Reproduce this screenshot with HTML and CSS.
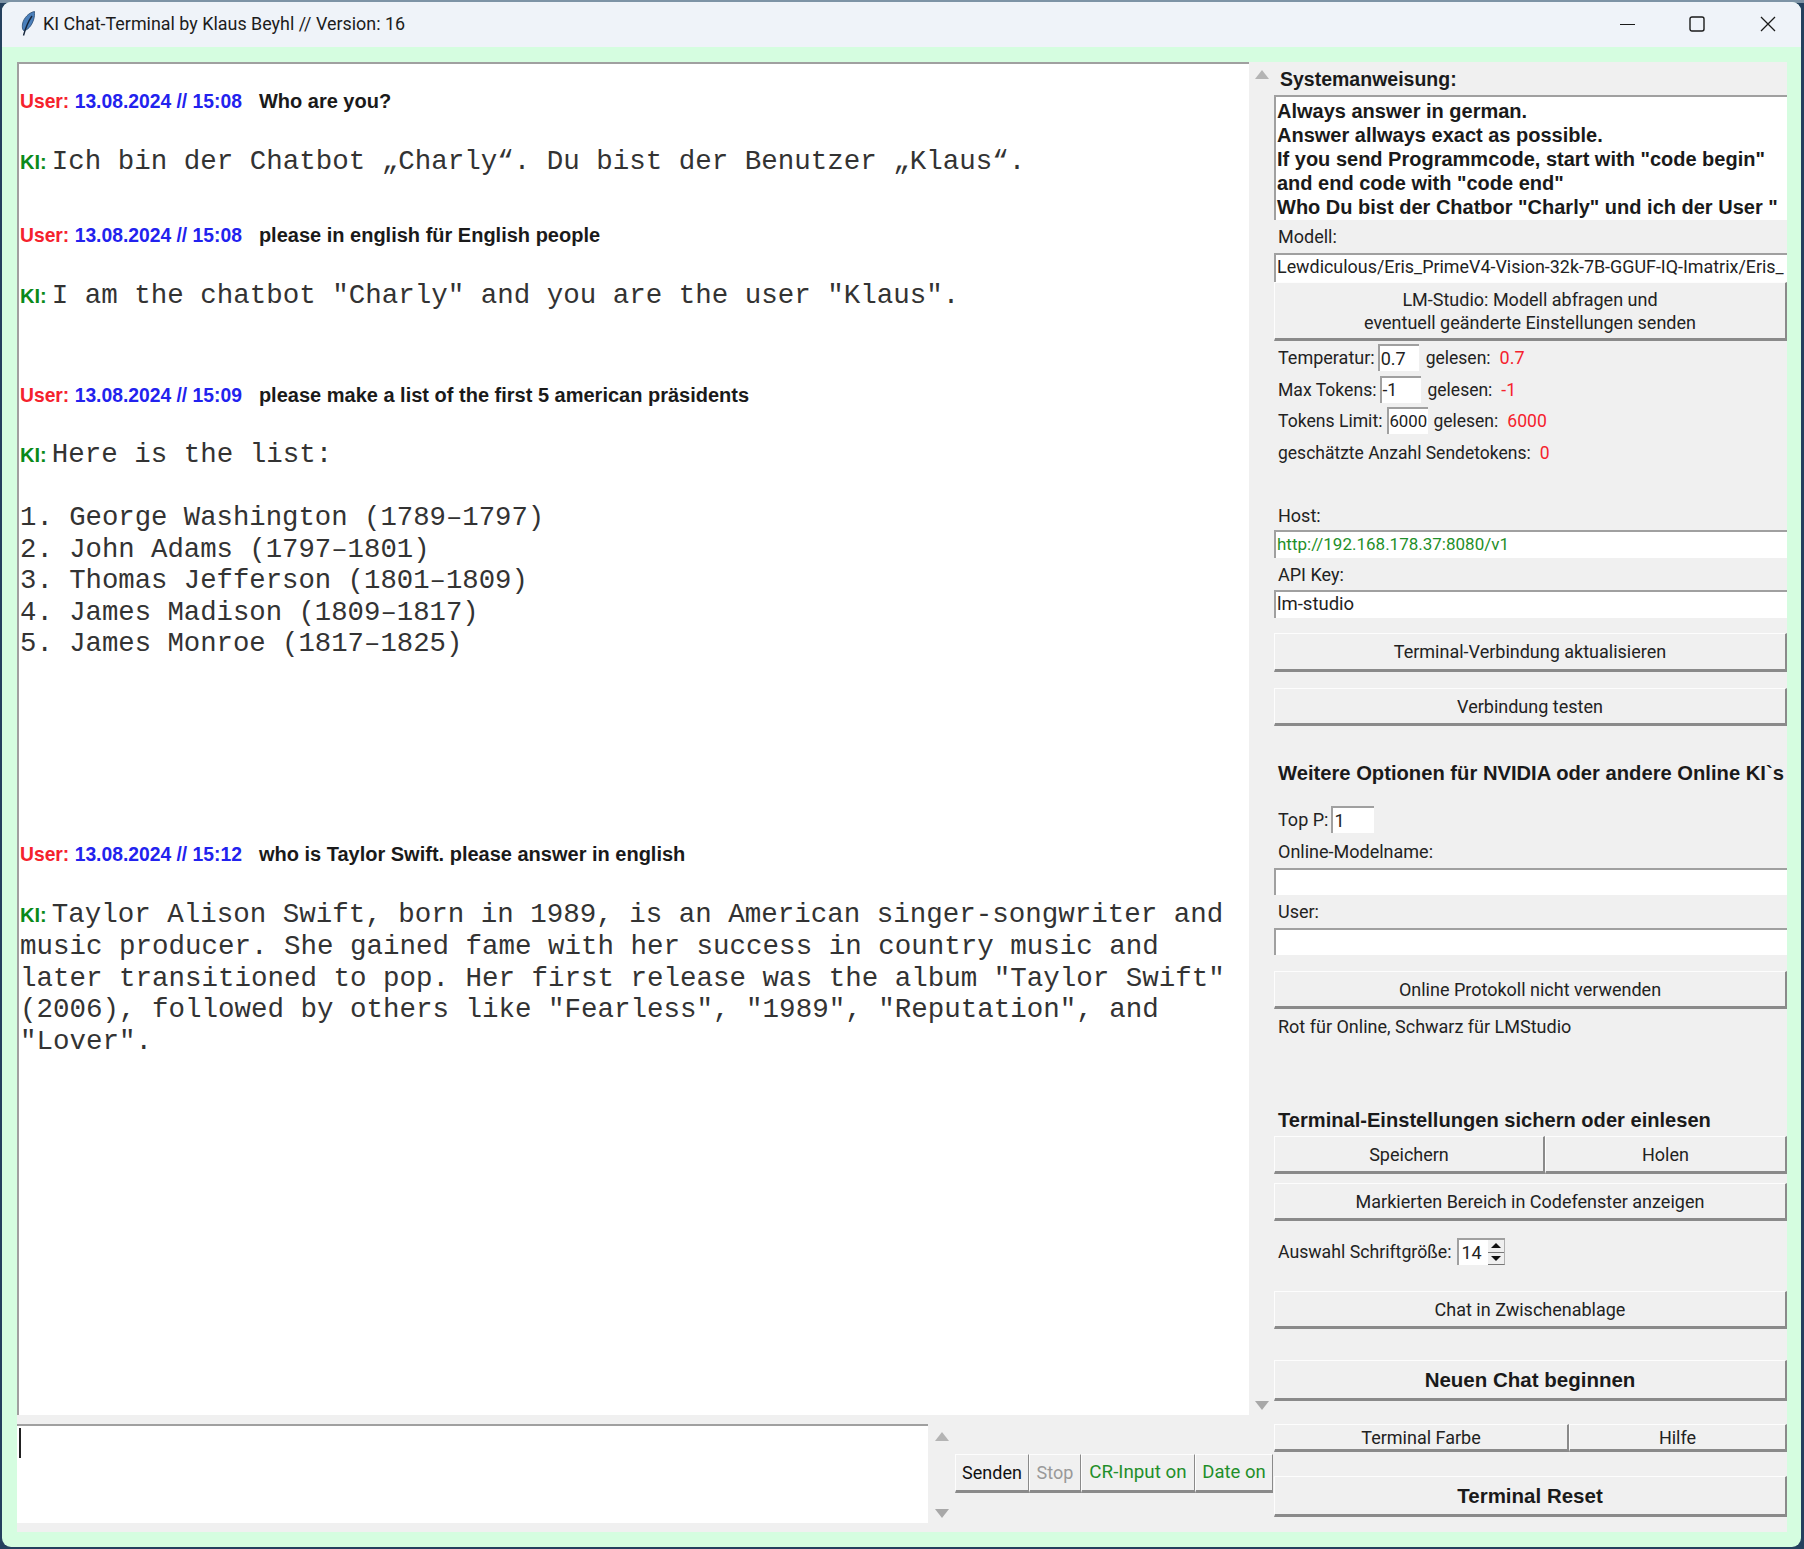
FILE: index.html
```html
<!DOCTYPE html>
<html lang="de">
<head>
    <meta charset="UTF-8">
    <title>KI Chat-Terminal by Klaus Beyhl // Version: 16</title>
    <link rel="stylesheet" href="styles.css">
</head>
<body>

<div class="window">

    <!-- Title bar -->
    <div class="titlebar">
        <svg class="feather" viewBox="0 0 14 25" width="14" height="25">
            <path d="M13.500 0.500 C8 1.500 2.500 7 1.500 13 C1 16 1.500 18.500 2.500 19.500 C6.500 19.500 10.500 15 12.500 9 C13.500 6 13.800 3 13.500 0.500 Z" fill="#4a7fbb" stroke="#27496f" stroke-width="0.800"/>
            <path d="M11 5 C7.500 10 4.500 17 2.500 24.500" fill="none" stroke="#16263c" stroke-width="1.400"/>
        </svg>
        <span class="title">KI Chat-Terminal by Klaus Beyhl // Version: 16</span>
        <div class="controls">
            <svg class="ctl ctl-min" viewBox="0 0 16 16" width="16" height="16"><path d="M0 8.500 H15" stroke="#1a1a1a" stroke-width="1.200"/></svg>
            <svg class="ctl ctl-max" viewBox="0 0 16 16" width="16" height="16"><rect x="1" y="1" width="14" height="14" rx="2" fill="none" stroke="#1a1a1a" stroke-width="1.400"/></svg>
            <svg class="ctl ctl-close" viewBox="0 0 16 16" width="16" height="16"><path d="M1 1 L15 15 M15 1 L1 15" stroke="#1a1a1a" stroke-width="1.300"/></svg>
        </div>
    </div>

    <div class="client">
        <div class="panel">

            <!-- Left: chat and input -->
            <div class="main">
                <div class="chat-row">
                    <div class="chat">
                        <p class="msg-user msg-1"><span class="who">User:</span> <span class="stamp">13.08.2024 // 15:08</span><span class="ask">Who are you?</span></p>
                        <p class="msg-ki msg-2"><span class="ki">KI:</span>Ich bin der Chatbot „Charly“. Du bist der Benutzer „Klaus“.</p>

                        <p class="msg-user msg-3"><span class="who">User:</span> <span class="stamp">13.08.2024 // 15:08</span><span class="ask">please in english für English people</span></p>
                        <p class="msg-ki msg-2"><span class="ki">KI:</span>I am the chatbot "Charly" and you are the user "Klaus".</p>

                        <p class="msg-user msg-4"><span class="who">User:</span> <span class="stamp">13.08.2024 // 15:09</span><span class="ask">please make a list of the first 5 american präsidents</span></p>
                        <p class="msg-ki msg-2"><span class="ki">KI:</span>Here is the list:</p>
                        <p class="msg-ki msg-list">1. George Washington (1789–1797)<br>2. John Adams (1797–1801)<br>3. Thomas Jefferson (1801–1809)<br>4. James Madison (1809–1817)<br>5. James Monroe (1817–1825)</p>

                        <p class="msg-user msg-5"><span class="who">User:</span> <span class="stamp">13.08.2024 // 15:12</span><span class="ask">who is Taylor Swift. please answer in english</span></p>
                        <p class="msg-ki msg-2"><span class="ki">KI:</span>Taylor Alison Swift, born in 1989, is an American singer-songwriter and<br>music producer. She gained fame with her success in country music and<br>later transitioned to pop. Her first release was the album "Taylor Swift"<br>(2006), followed by others like "Fearless", "1989", "Reputation", and<br>"Lover".</p>
                    </div>
                    <div class="scroll scroll-chat">
                        <span class="arrow-up"></span>
                        <span class="arrow-down"></span>
                    </div>
                </div>

                <div class="input-row">
                    <div class="input-box"><span class="caret"></span></div>
                    <div class="scroll scroll-input">
                        <span class="arrow-up"></span>
                        <span class="arrow-down"></span>
                    </div>
                    <div class="send-btns">
                        <div class="btn small btn-send">Senden</div>
                        <div class="btn small btn-stop muted">Stop</div>
                        <div class="btn small btn-cr green">CR-Input on</div>
                        <div class="btn small btn-date green">Date on</div>
                    </div>
                </div>
            </div>

            <!-- Right: settings -->
            <div class="side">
                <div class="label bold sys-label">Systemanweisung:</div>
                <div class="sys-text">Always answer in german.<br>Answer allways exact as possible.<br>If you send Programmcode, start with "code begin"<br>and end code with "code end"<br>Who Du bist der Chatbor "Charly" und ich der User "</div>

                <div class="label h33">Modell:</div>
                <div class="entry h29 model">Lewdiculous/Eris_PrimeV4-Vision-32k-7B-GGUF-IQ-Imatrix/Eris_</div>
                <div class="btn h59">LM-Studio: Modell abfragen und<br>eventuell geänderte Einstellungen senden</div>

                <div class="row row-temp">
                    <span>Temperatur:</span><span class="entry mini w41">0.7</span><span class="read">gelesen:</span><span class="red">0.7</span>
                </div>
                <div class="row row-next">
                    <span>Max Tokens:</span><span class="entry mini w41">-1</span><span class="read">gelesen:</span><span class="red">-1</span>
                </div>
                <div class="row row-last">
                    <span>Tokens Limit:</span><span class="entry mini w41 narrow">6000</span><span class="read tight">gelesen:</span><span class="red">6000</span>
                </div>
                <div class="row row-send">
                    <span>geschätzte Anzahl Sendetokens:</span><span class="red">0</span>
                </div>

                <div class="label h30 mt34">Host:</div>
                <div class="entry h28 green url">http://192.168.178.37:8080/v1</div>
                <div class="label h32">API Key:</div>
                <div class="entry h28 key">lm-studio</div>

                <div class="btn h39 mt15">Terminal-Verbindung aktualisieren</div>
                <div class="btn h38 mt16">Verbindung testen</div>

                <div class="label bold head mt30">Weitere Optionen für NVIDIA oder andere Online KI`s</div>
                <div class="row row-topp">
                    <span>Top P:</span><span class="entry mini w43">1</span>
                </div>
                <div class="label h33 mt2">Online-Modelname:</div>
                <div class="entry h27"></div>
                <div class="label h33">User:</div>
                <div class="entry h27"></div>
                <div class="btn h38 mt16">Online Protokoll nicht verwenden</div>
                <div class="label h33 mt1">Rot für Online, Schwarz für LMStudio</div>

                <div class="label bold head2 mt61">Terminal-Einstellungen sichern oder einlesen</div>
                <div class="split">
                    <div class="btn h38 save">Speichern</div>
                    <div class="btn h38 grow">Holen</div>
                </div>
                <div class="btn h38 mt9">Markierten Bereich in Codefenster anzeigen</div>

                <div class="row row-spin">
                    <span>Auswahl Schriftgröße:</span>
                    <span class="entry mini spin">14
                        <span class="spin-btns">
                            <span class="spin-half"><span class="tri-up"></span></span>
                            <span class="spin-half"><span class="tri-down"></span></span>
                        </span>
                    </span>
                </div>

                <div class="btn h38 mt26">Chat in Zwischenablage</div>
                <div class="btn h41 mt31 bold big">Neuen Chat beginnen</div>
                <div class="split mt23">
                    <div class="btn h28 color">Terminal Farbe</div>
                    <div class="btn h28 grow">Hilfe</div>
                </div>
                <div class="btn h41 mt24 bold big">Terminal Reset</div>
            </div>

        </div>
    </div>
</div>

</body>
</html>
```

FILE: styles.css
```css
* {
    box-sizing: border-box;
}
html, body {
    height: 100%;
}
body {
    margin: 0;
    background: linear-gradient(to bottom, #7d93a6 0, #7d93a6 3px, #24405e 3px);
    overflow: hidden;
    font-family: Roboto, "Noto Sans", sans-serif;
    font-size: 18px;
    color: #222;
}
p {
    margin: 0;
}

/* window frame */
.window {
    width: 1799px;
    height: 1545px;
    margin: 2px 0 0 2px;
    border-radius: 9px;
    overflow: hidden;
    display: flex;
    flex-direction: column;
    background: #d5fde0;
}
.titlebar {
    height: 45px;
    background: #eff3f9;
    display: flex;
    align-items: center;
    padding: 0 0 2px 19px;
}
.feather {
    flex: none;
}
.title {
    margin-left: 8px;
    font-size: 17.900px;
    color: #1c1c1c;
}
.controls {
    margin-left: auto;
    display: flex;
    align-items: center;
    padding-right: 25px;
}
.ctl-max {
    margin-left: 53px;
}
.ctl-close {
    margin-left: 55px;
}

.client {
    flex: 1;
    padding: 15px 14px 15px 15px;
}
.panel {
    height: 100%;
    background: #f0f0f0;
    display: flex;
}

/* left part */
.main {
    width: 1257px;
    display: flex;
    flex-direction: column;
}
.chat-row {
    height: 1353px;
    display: flex;
}
.chat {
    width: 1232px;
    background: #fff;
    border-top: 2px solid #a0a0a0;
    border-left: 2px solid #a0a0a0;
    padding: 25px 0 0 1px;
    font-family: "Liberation Mono", monospace;
    font-size: 27.500px;
    line-height: 31.500px;
    color: #333;
    overflow: hidden;
    white-space: nowrap;
}
.msg-user {
    font-family: "Liberation Sans", Arial, sans-serif;
    font-weight: bold;
    font-size: 19.300px;
    line-height: 24px;
    color: #1a1a1a;
}
.msg-3 { margin-top: 45px; }
.msg-4 { margin-top: 70px; }
.msg-5 { margin-top: 182px; }
.msg-2 { margin-top: 31.750px; }
.msg-list { margin-top: 30.500px; font-size: 27.300px; }
.who { color: #f5222d; }
.stamp { color: #2222ee; }
.ask { margin-left: 17px; font-size: 20px; }
.ki {
    font-family: "Liberation Sans", Arial, sans-serif;
    font-weight: bold;
    font-size: 20px;
    color: #0a8a1a;
    margin-right: 5px;
}

.scroll {
    display: flex;
    flex-direction: column;
    justify-content: space-between;
    align-items: center;
}
.scroll-chat {
    flex: 1;
    padding: 8px 0 5px;
}
.arrow-up {
    width: 0;
    height: 0;
    border-left: 7px solid transparent;
    border-right: 7px solid transparent;
    border-bottom: 9px solid #b4b4b4;
}
.arrow-down {
    width: 0;
    height: 0;
    border-left: 7px solid transparent;
    border-right: 7px solid transparent;
    border-top: 9px solid #a8a8a8;
}

.input-row {
    margin-top: 9px;
    height: 99px;
    display: flex;
}
.input-box {
    width: 911px;
    background: #fff;
    border-top: 2px solid #a0a0a0;
    padding: 2px 0 0 2px;
}
.caret {
    display: block;
    width: 2px;
    height: 30px;
    background: #222;
}
.scroll-input {
    width: 27px;
    padding: 8px 0 5px;
}
.send-btns {
    display: flex;
    margin-top: 30px;
    height: 39px;
}

/* buttons */
.btn {
    display: flex;
    align-items: center;
    justify-content: center;
    text-align: center;
    background: #f0f0f0;
    border-top: 1px solid #fdfdfd;
    border-left: 1px solid #fdfdfd;
    border-right: 2px solid #8a8a8a;
    border-bottom: 3px solid #8a8a8a;
    line-height: 23px;
}
.small {
    border-right-width: 1px;
}
.btn-send { width: 74px; color: #111; }
.btn-stop { width: 52px; }
.btn-cr { width: 114px; font-size: 18.800px; }
.btn-date { width: 78px; font-size: 18.500px; }
.muted { color: #999; }
.green { color: #1f8f2a; }
.bold { font-family: "Liberation Sans", Arial, sans-serif; font-weight: bold; }
.big { font-size: 20.500px; color: #1a1a1a; }

/* right part */
.side {
    width: 513px;
    display: flex;
    flex-direction: column;
}
.label {
    display: flex;
    align-items: center;
    padding-left: 4px;
}
.sys-label {
    height: 33px;
    padding-top: 1px;
    padding-left: 6px;
    font-size: 19.500px;
    color: #1a1a1a;
}
.sys-text {
    height: 125px;
    background: #fff;
    border-top: 2px solid #a0a0a0;
    border-left: 2px solid #a0a0a0;
    padding: 2px 0 0 1px;
    font-family: "Liberation Sans", Arial, sans-serif;
    font-weight: bold;
    font-size: 20px;
    line-height: 24px;
    color: #1a1a1a;
    white-space: nowrap;
    overflow: hidden;
}
.entry {
    display: block;
    background: #fff;
    border-top: 2px solid #a0a0a0;
    border-left: 2px solid #a0a0a0;
    padding-left: 1px;
    line-height: 25px;
    white-space: nowrap;
    overflow: hidden;
}
.model { font-size: 17.900px; line-height: 24px; }
.url { font-size: 17px; }
.key { font-size: 18.500px; }
.mini { flex: none; height: 27px; margin-left: 3px; }
.w41 { width: 41px; }
.w43 { width: 43px; }
.narrow { font-size: 16.800px; padding-left: 0; margin-left: 5px; }
.h27 { height: 27px; flex: none; }
.h28 { height: 28px; flex: none; }
.h29 { height: 29px; flex: none; }
.h30 { height: 30px; flex: none; }
.h32 { height: 32px; flex: none; }
.h33 { height: 33px; flex: none; }
.h38 { height: 38px; flex: none; }
.h39 { height: 39px; flex: none; }
.h41 { height: 41px; flex: none; }
.h59 { height: 59px; flex: none; }
.mt1 { margin-top: 1px; }
.mt2 { margin-top: 2px; }
.mt9 { margin-top: 9px; }
.mt15 { margin-top: 15px; }
.mt16 { margin-top: 16px; }
.mt23 { margin-top: 23px; }
.mt24 { margin-top: 24px; }
.mt26 { margin-top: 26px; }
.mt30 { margin-top: 30px; }
.mt31 { margin-top: 31px; }
.mt34 { margin-top: 34px; }
.mt61 { margin-top: 61px; }

.row {
    display: flex;
    align-items: center;
    height: 27px;
    padding-left: 4px;
    flex: none;
}
.row-temp { margin-top: 3px; }
.row-next { margin-top: 5px; font-size: 17.600px; }
.row-last { margin-top: 4px; font-size: 17.600px; }
.row-send { margin-top: 5px; font-size: 17.500px; }
.row-topp { margin-top: 16px; }
.row-spin { margin-top: 17px; font-size: 17.700px; }
.read { margin-left: 7px; font-size: 17.500px; }
.tight { margin-left: 5px; }
.red { color: #f5222d; margin-left: 9px; }
.head {
    height: 34px;
    font-size: 20.200px;
    flex: none;
    white-space: nowrap;
    color: #1a1a1a;
}
.head2 {
    height: 32px;
    font-size: 20.100px;
    flex: none;
    color: #1a1a1a;
}
.split {
    display: flex;
    flex: none;
}
.save { width: 271px; }
.color { width: 295px; }
.grow { flex: 1; }

.spin {
    position: relative;
    width: 48px;
    margin-left: 6px;
    padding-left: 2px;
    font-size: 18px;
}
.spin-btns {
    position: absolute;
    right: 0;
    top: 0;
    width: 17px;
    height: 25px;
    background: #f0f0f0;
    display: flex;
    flex-direction: column;
    border-right: 1px solid #b0b0b0;
    border-bottom: 1px solid #777;
}
.spin-half {
    flex: 1;
    display: flex;
    align-items: center;
    justify-content: center;
}
.spin-half + .spin-half {
    border-top: 1px solid #777;
}
.tri-up {
    width: 0;
    height: 0;
    border-left: 5px solid transparent;
    border-right: 5px solid transparent;
    border-bottom: 5px solid #111;
}
.tri-down {
    width: 0;
    height: 0;
    border-left: 5px solid transparent;
    border-right: 5px solid transparent;
    border-top: 5px solid #111;
}
```
